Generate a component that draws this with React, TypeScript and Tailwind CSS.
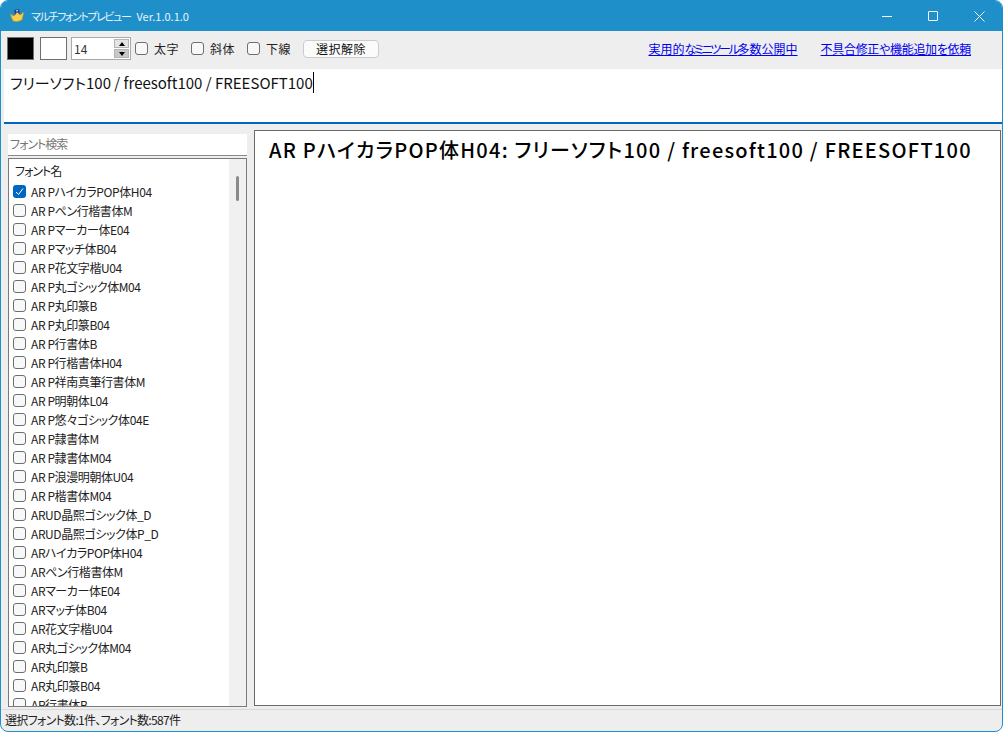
const fonts = [
  "AR PハイカラPOP体H04", "AR Pペン行楷書体M", "AR Pマーカー体E04", "AR Pマッチ体B04", "AR P花文字楷U04",
  "AR P丸ゴシック体M04", "AR P丸印篆B", "AR P丸印篆B04", "AR P行書体B", "AR P行楷書体H04",
  "AR P祥南真筆行書体M", "AR P明朝体L04", "AR P悠々ゴシック体04E", "AR P隷書体M", "AR P隷書体M04",
  "AR P浪漫明朝体U04", "AR P楷書体M04", "ARUD晶熙ゴシック体_D", "ARUD晶熙ゴシック体P_D", "ARハイカラPOP体H04",
  "ARペン行楷書体M", "ARマーカー体E04", "ARマッチ体B04", "AR花文字楷U04", "AR丸ゴシック体M04",
  "AR丸印篆B", "AR丸印篆B04", "AR行書体B",
]

const text = "フリーソフト100 / freesoft100 / FREESOFT100"

function StyleCheck({ label, className }: { label: string; className: string }) {
  return (
    <label className={`flex items-center gap-[6px] ${className}`}>
      <span className="w-[13px] h-[13px] rounded-[3px] border border-[#6e6e6e] bg-[#f8f8f8]" />
      <span className="text-[12px] tracking-[0.5px] text-[#222]">{label}</span>
    </label>
  )
}

export default function App() {
  return (
    <div className="w-[1003px] h-[732px] bg-white overflow-hidden [font-feature-settings:'palt']" style={{ fontFamily: '"Noto Sans CJK JP", "Noto Sans", sans-serif' }}>
      <div className="w-full h-full flex flex-col rounded-[8px] border border-[#1f8fc9] bg-[#eeeeee] overflow-hidden">
        {/* title bar */}
        <div className="h-[30px] shrink-0 bg-[#1f8fc9] flex items-center text-white">
          <svg className="ml-[8px] w-[16px] h-[16px]" viewBox="0 0 16 16">
            <path d="M1 6 L5 8 L8 4 L11 7 L15 4 L13 12 Q8 15 4 13 Z" fill="#f5cf4f" stroke="#b58a24" strokeWidth="0.7" />
            <path d="M5 2 L10 1 L11 6 L8 4 L6 7 Z" fill="#2f3f8f" />
            <path d="M7 3 L9 2.5" stroke="#dfe6ff" strokeWidth="1" />
          </svg>
          <span className="ml-[6px] text-[11px] tracking-[-1.4px] text-[#e8f4fb]">マルチフォントプレビュー</span>
          <span className="ml-[6px] text-[11px] text-[#e8f4fb]">Ver.1.0.1.0</span>
          <div className="ml-auto flex items-center h-full">
            <div className="w-[46px] flex justify-center"><div className="w-[10px] h-px bg-white" /></div>
            <div className="w-[46px] flex justify-center"><div className="w-[10px] h-[10px] rounded-[1px] border border-white" /></div>
            <div className="w-[46px] flex justify-center">
              <svg className="w-[11px] h-[11px]" viewBox="0 0 11 11"><path d="M0.5 0.5 L10.5 10.5 M10.5 0.5 L0.5 10.5" stroke="white" strokeWidth="1" /></svg>
            </div>
          </div>
        </div>

        {/* toolbar */}
        <div className="h-[38px] shrink-0 flex items-center pl-[6px] pr-[31px] pb-[3px]">
          <div className="w-[27px] h-[23px] bg-black border border-[#6e6e6e]" />
          <div className="ml-[6px] w-[27px] h-[23px] bg-white border border-[#6e6e6e]" />
          <div className="ml-[4px] w-[60px] h-[23px] bg-white border border-[#aaaaaa] flex items-center justify-between">
            <span className="ml-[2px] text-[12px] text-[#333]">14</span>
            <div className="w-[15px] h-[19px] mr-[1px] flex flex-col gap-px">
              <div className="h-[9px] bg-[#e4e4e4] border border-[#b5b5b5] flex items-center justify-center">
                <div className="border-x-[3px] border-x-transparent border-b-[4px] border-b-black" />
              </div>
              <div className="h-[9px] bg-[#c8c8c8] border border-[#b5b5b5] flex items-center justify-center">
                <div className="border-x-[3px] border-x-transparent border-t-[4px] border-t-black" />
              </div>
            </div>
          </div>
          <StyleCheck label="太字" className="ml-[4px]" />
          <StyleCheck label="斜体" className="ml-[12px]" />
          <StyleCheck label="下線" className="ml-[12px]" />
          <button className="ml-[12px] w-[76px] h-[18px] rounded-[4px] border border-[#cccccc] bg-[#fbfbfb] text-[12px] leading-[16px] tracking-[0.5px] text-[#111]">選択解除</button>
          <a className="ml-auto text-[12px] text-[#0000ee] underline">実用的<span className="tracking-[-2.3px]">なミニツール</span>多数公開中</a>
          <a className="ml-[23px] text-[12px] tracking-[-0.3px] text-[#0000ee] underline">不具合修正や機能追加を依頼</a>
        </div>

        {/* input */}
        <div className="h-[55px] shrink-0 mx-[3px] -mr-[1px] bg-white border-b-2 border-[#0067c0] pl-[6px] pt-[1px]">
          <span className="text-[15px] leading-[22px] text-[#111] border-r border-black">{text}</span>
        </div>

        {/* main */}
        <div className="flex-1 min-h-0 flex pl-[7px] pr-[1px]">
          <div className="w-[239px] shrink-0 flex flex-col pt-[10px] pb-[2px]">
            <div className="h-[22px] shrink-0 bg-white border-b border-[#8a8a8a] pl-[2px] text-[12px] tracking-[-1px] leading-[20px] text-[#777]">フォント検索</div>
            <div className="flex-1 min-h-0 mt-[2px] border border-[#7a7a7a] bg-white flex overflow-hidden">
              <div className="flex-1 min-w-0 overflow-hidden">
                <div className="h-[23px] pl-[6px] text-[12px] tracking-[-1px] leading-[23px] text-[#222]">フォント名</div>
                <div>
                  {fonts.map((name, i) => (
                    <div key={name} className="h-[19px] flex items-center pl-[4px]">
                      {i === 0 ? (
                        <span className="w-[13px] h-[13px] rounded-[3px] bg-[#0067c0] flex items-center justify-center">
                          <svg className="w-[9px] h-[9px]" viewBox="0 0 9 9"><path d="M1 5 L3.5 7.5 L8 1.5" fill="none" stroke="white" strokeWidth="1" /></svg>
                        </span>
                      ) : (
                        <span className="w-[13px] h-[13px] rounded-[3px] border border-[#6e6e6e] bg-[#f8f8f8]" />
                      )}
                      <span className="ml-[5px] text-[12px] tracking-[-0.4px] text-[#222] whitespace-nowrap">{name}</span>
                    </div>
                  ))}
                </div>
              </div>
              <div className="w-[17px] shrink-0 bg-[#f0f0f0] pt-[17px] flex justify-center">
                <div className="w-[3px] h-[25px] rounded-full bg-[#8a8a8a]" />
              </div>
            </div>
          </div>
          <div className="flex-1 min-w-0 ml-[7px] mt-[6px] mb-[3px] border border-[#6a6a6a] bg-white pl-[14px] pt-[4px]">
            <div className="text-[20px] leading-[30px] font-medium tracking-[1.25px] text-black whitespace-nowrap">AR PハイカラPOP体H04: {text}</div>
          </div>
        </div>

        {/* status bar */}
        <div className="h-[22px] shrink-0 border-t border-[#d8d8d8] pl-[4px] text-[12px] tracking-[-0.7px] leading-[20px] text-[#222]">選択フォント数:1件、フォント数:587件</div>
      </div>
    </div>
  )
}
